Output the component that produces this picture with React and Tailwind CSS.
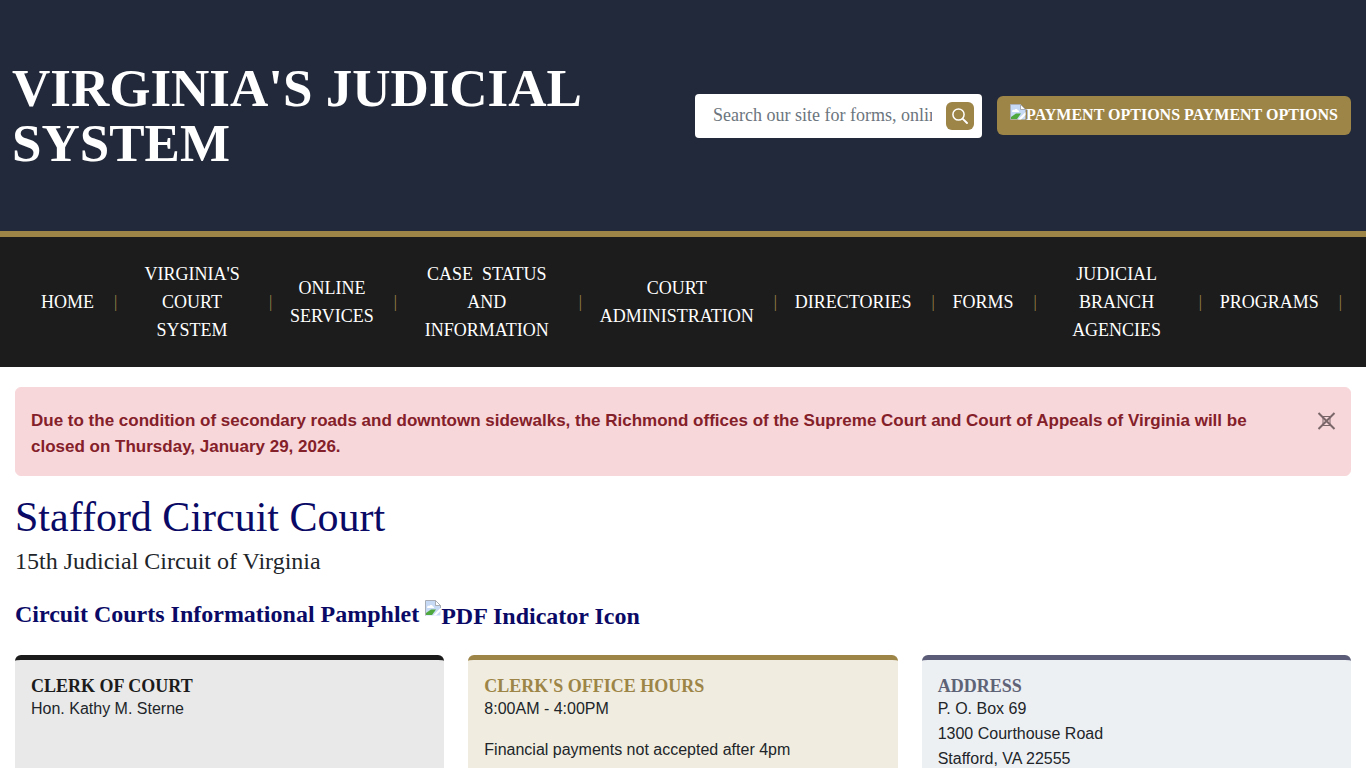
const navItems = [
  { lines: ['HOME'], width: '' },
  { lines: ["VIRGINIA'S", 'COURT', 'SYSTEM'], width: 'min-w-[114px]' },
  { lines: ['ONLINE', 'SERVICES'], width: '' },
  { lines: ['CASE\u00a0 STATUS', 'AND', 'INFORMATION'], width: 'min-w-[144px]' },
  { lines: ['COURT', 'ADMINISTRATION'], width: '' },
  { lines: ['DIRECTORIES'], width: '' },
  { lines: ['FORMS'], width: '' },
  { lines: ['JUDICIAL', 'BRANCH', 'AGENCIES'], width: 'min-w-[124px]' },
  { lines: ['PROGRAMS'], width: '' },
]

const cards = [
  {
    title: 'CLERK OF COURT',
    box: 'border-[#1b1b1b] bg-[#e9e9e9]',
    heading: 'text-[#1b1b1b]',
    lines: ['Hon. Kathy M. Sterne'],
  },
  {
    title: "CLERK'S OFFICE HOURS",
    box: 'border-[#9d8447] bg-[#f0ede0]',
    heading: 'text-[#9d8447]',
    lines: ['8:00AM - 4:00PM', '', 'Financial payments not accepted after 4pm'],
  },
  {
    title: 'ADDRESS',
    box: 'border-[#5b5d78] bg-[#edf0f3]',
    heading: 'text-[#5f6377]',
    lines: ['P. O. Box 69', '1300 Courthouse Road', 'Stafford, VA 22555'],
  },
]

function BrokenImage() {
  return (
    <svg width="16" height="16" viewBox="0 0 16 16" className="shrink-0" aria-hidden="true">
      <path d="M.5 .5H10.500L15.500 5.500V15.500H.5z" fill="#c6d9f5" />
      <path d="M2 7.500C2 6 3.500 5.500 4.500 6C5 4.500 7.500 4.500 8 6.500C9.500 6.500 9.500 8 8.500 8H2.500z" fill="#fff" />
      <path d="M1 15V13L6 9.500H11L7 15z" fill="#4fa83d" />
      <path d="M15.500 8L8 15.500H11L15.500 11z" fill="#fff" />
      <path d="M.5 15.500V.5H10.500L15.500 5.500V8M10.500 .5V5.500H15.500" fill="none" stroke="#a9adb5" />
      <path d="M10.500 .5V5.500H15.500z" fill="#fff" stroke="#a9adb5" />
    </svg>
  )
}

function Header() {
  return (
    <header className="flex min-h-[237px] items-center border-b-6 border-[#9d8447] bg-[#22293a] pr-[15px] pl-3">
      <h1 className="flex-1 text-[53px] leading-[55px] font-bold text-white">
        VIRGINIA'S JUDICIAL SYSTEM
      </h1>
      <form
        className="ml-4 flex h-11 w-[287px] items-center rounded bg-white pr-2 pl-[18px]"
        onSubmit={(e) => e.preventDefault()}
      >
        <input
          type="text"
          aria-label="Search our site"
          placeholder="Search our site for forms, online services"
          className="h-full min-w-0 flex-1 text-lg placeholder-[#6c757d] outline-none"
        />
        <button
          type="submit"
          aria-label="Search"
          className="ml-[14px] flex size-7 items-center justify-center rounded-md bg-[#9d8447] text-white"
        >
          <svg width="16" height="16" viewBox="0 0 16 16" fill="none" stroke="currentColor">
            <circle cx="6.500" cy="6.500" r="5.600" strokeWidth="1.500" />
            <path d="M10.800 10.800L15 15" strokeWidth="1.900" strokeLinecap="round" />
          </svg>
        </button>
      </form>
      <a
        href="#payment"
        className="ml-[15px] flex h-[39px] items-start rounded-md bg-[#9d8447] px-[13px] pt-2 text-base leading-[22px] font-bold whitespace-nowrap text-white"
      >
        <span className="flex items-start">
          <BrokenImage />
          <span>PAYMENT OPTIONS</span>
        </span>
        <span className="ml-1">PAYMENT OPTIONS</span>
      </a>
    </header>
  )
}

function Nav() {
  return (
    <nav className="bg-[#1c1c1c] py-[23px] pr-6 pl-[41px]">
      <ul className="flex items-center justify-between text-lg leading-7 text-white">
        {navItems.map((item) => (
          <li key={item.lines[0]} className="flex items-center">
            <a href="#nav" className={`text-center ${item.width}`}>
              {item.lines.map((line) => (
                <span key={line} className="block whitespace-nowrap">{line}</span>
              ))}
            </a>
            <span className="ml-5 text-base text-[#9d8447]">|</span>
          </li>
        ))}
      </ul>
    </nav>
  )
}

function Alert() {
  return (
    <div
      role="alert"
      className="flex items-start justify-between rounded-md border border-[#f8d7da] bg-[#f8d7da] pt-5 pr-[14px] pb-[15px] pl-[15px] font-['Liberation_Sans',Arial,sans-serif] text-[#842029]"
    >
      <p className="max-w-[1240px] text-[17px] leading-[26px] font-bold">
        Due to the condition of secondary roads and downtown sidewalks, the Richmond offices of the
        Supreme Court and Court of Appeals of Virginia will be closed on Thursday, January 29, 2026.
      </p>
      <button type="button" aria-label="Close" className="mt-1 text-[#7a676a]">
        <svg width="19" height="18" viewBox="0 0 19 18" fill="none" stroke="currentColor">
          <path d="M1.500 1L17.500 17M17.500 1L1.500 17" strokeWidth="2" />
          <path d="M5 4.500H14M5 13.500H14M6 4.500V13.500M13 4.500V13.500" strokeWidth="1" />
        </svg>
      </button>
    </div>
  )
}

export default function App() {
  return (
    <div className="h-screen overflow-hidden bg-white font-['Liberation_Serif','Times_New_Roman',serif] text-[#212529]">
      <Header />
      <Nav />

      <main className="px-[15px] pt-5">
        <Alert />

        <h2 className="mt-4 text-[42px] leading-[50px] text-[#0a0a66]">Stafford Circuit Court</h2>
        <p className="mt-[3px] text-2xl leading-8">15th Judicial Circuit of Virginia</p>

        <h3 className="mt-[21px] text-2xl leading-8 font-bold text-[#0a0a66]">
          <a href="#pamphlet" className="flex items-start">
            <span>Circuit Courts Informational Pamphlet</span>
            <span className="ml-[6px] flex items-start pt-[2px]">
              <BrokenImage />
              <span>PDF Indicator Icon</span>
            </span>
          </a>
        </h3>

        {/* Court details */}
        <div className="mt-[23px] grid grid-cols-3 gap-6">
          {cards.map((card) => (
            <section key={card.title} className={`min-h-60 rounded-md border-t-5 px-4 pt-4 pb-4 ${card.box}`}>
              <h4 className={`text-lg leading-5 font-bold ${card.heading}`}>{card.title}</h4>
              <div className="font-['Liberation_Sans',Arial,sans-serif] text-base leading-[25px]">
                {card.lines.map((line, i) => (
                  <p key={i} className={line ? '' : 'h-4'}>{line}</p>
                ))}
              </div>
            </section>
          ))}
        </div>
      </main>
    </div>
  )
}
